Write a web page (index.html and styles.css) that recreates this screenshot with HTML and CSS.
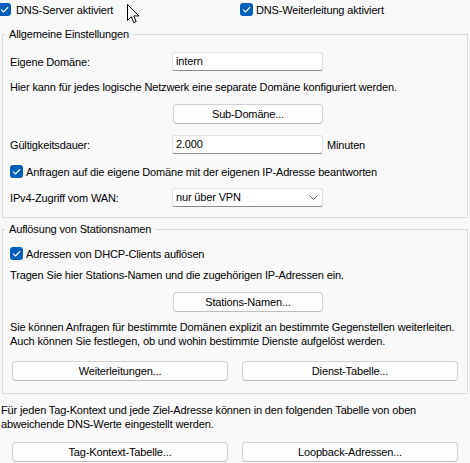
FILE: index.html
```html
<!DOCTYPE html>
<html lang="de">
<head>
<meta charset="utf-8">
<title>DNS</title>
<link rel="stylesheet" href="styles.css">
</head>
<body>
<div class="top">
  <label class="check first"><span class="cb"><svg viewBox="0 0 13 13" width="13" height="13"><path d="M3.3 6.8 L5.5 9 L9.8 4.5" fill="none" stroke="#fff" stroke-width="1.1" stroke-linecap="round" stroke-linejoin="round"/></svg></span>DNS-Server aktiviert</label>
  <label class="check"><span class="cb"><svg viewBox="0 0 13 13" width="13" height="13"><path d="M3.3 6.8 L5.5 9 L9.8 4.5" fill="none" stroke="#fff" stroke-width="1.1" stroke-linecap="round" stroke-linejoin="round"/></svg></span>DNS-Weiterleitung aktiviert</label>
</div>

<fieldset class="group g1">
  <legend>Allgemeine Einstellungen</legend>
  <div class="form-row r-domain">
    <span class="lbl">Eigene Domäne:</span>
    <div class="field">intern</div>
  </div>
  <p class="txt r-hint">Hier kann für jedes logische Netzwerk eine separate Domäne konfiguriert werden.</p>
  <div class="form-row r-sub">
    <span class="lbl"></span>
    <div class="btn narrow">Sub-Domäne...</div>
  </div>
  <div class="form-row r-valid">
    <span class="lbl">Gültigkeitsdauer:</span>
    <div class="field">2.000</div>
    <span class="unit">Minuten</span>
  </div>
  <label class="check inner r-answer"><span class="cb"><svg viewBox="0 0 13 13" width="13" height="13"><path d="M3.3 6.8 L5.5 9 L9.8 4.5" fill="none" stroke="#fff" stroke-width="1.1" stroke-linecap="round" stroke-linejoin="round"/></svg></span>Anfragen auf die eigene Domäne mit der eigenen IP-Adresse beantworten</label>
  <div class="form-row r-wan">
    <span class="lbl">IPv4-Zugriff vom WAN:</span>
    <div class="field select">nur über VPN<svg class="chev" viewBox="0 0 9 5" width="9" height="5"><path d="M0.5 0.5 L4.5 4.5 L8.5 0.5" fill="none" stroke="#5f5f5f" stroke-width="1"/></svg></div>
  </div>
</fieldset>

<fieldset class="group g2">
  <legend>Auflösung von Stationsnamen</legend>
  <label class="check inner r-dhcp"><span class="cb"><svg viewBox="0 0 13 13" width="13" height="13"><path d="M3.3 6.8 L5.5 9 L9.8 4.5" fill="none" stroke="#fff" stroke-width="1.1" stroke-linecap="round" stroke-linejoin="round"/></svg></span>Adressen von DHCP-Clients auflösen</label>
  <p class="txt r-trag">Tragen Sie hier Stations-Namen und die zugehörigen IP-Adressen ein.</p>
  <div class="form-row r-stat">
    <span class="lbl"></span>
    <div class="btn narrow">Stations-Namen...</div>
  </div>
  <p class="txt r-sie">Sie können Anfragen für bestimmte Domänen explizit an bestimmte Gegenstellen weiterleiten.<br>Auch können Sie festlegen, ob und wohin bestimmte Dienste aufgelöst werden.</p>
  <div class="btn-pair r-fwd">
    <div class="btn">Weiterleitungen...</div>
    <div class="btn">Dienst-Tabelle...</div>
  </div>
</fieldset>

<p class="txt bottom-text">Für jeden Tag-Kontext und jede Ziel-Adresse können in den folgenden Tabelle von oben<br>abweichende DNS-Werte eingestellt werden.</p>
<div class="btn-pair bottom-btns">
  <div class="btn">Tag-Kontext-Tabelle...</div>
  <div class="btn">Loopback-Adressen...</div>
</div>

<svg class="cursor" viewBox="0 0 13 20" width="13" height="20"><path d="M0.5 0.5 L0.5 16.5 L4.3 12.8 L6.8 18.6 L9.2 17.6 L6.8 11.9 L11.9 11.9 Z" fill="#fff" stroke="#000" stroke-width="1" stroke-linejoin="round"/></svg>
</body>
</html>
```

FILE: styles.css
```css
* { box-sizing: border-box; }

html, body {
  margin: 0;
  padding: 0;
}

body {
  width: 470px;
  height: 463px;
  overflow: hidden;
  position: relative;
  background: #f9f9f9;
  color: #000;
  font-family: "Liberation Sans", Arial, sans-serif;
  font-size: 11px;
  line-height: 14px;
  letter-spacing: -0.15px;
}

p { margin: 0; }

.txt { white-space: nowrap; }

.top {
  display: grid;
  grid-template-columns: 240px 1fr;
  height: 19px;
  align-items: center;
}

.check {
  display: flex;
  align-items: center;
  height: 13px;
  white-space: nowrap;
}

.check.first { margin-left: -2px; }
.check.first .cb { margin-right: 5px; }

.cb {
  width: 13px;
  height: 13px;
  flex: none;
  border-radius: 3px;
  background: #005fb8;
  margin-right: 3px;
  display: block;
}

.cb svg { display: block; }

.group {
  margin: 8px 2px 0 2px;
  padding: 0 0 0 7px;
  border: 1px solid #dcdcdc;
  min-width: 0;
}

.group legend {
  margin-left: -5px;
  padding: 0 4px 0 4px;
  line-height: 14px;
  height: 14px;
}

.g1 { padding-bottom: 10px; }
.g2 { margin-top: 4px; padding-bottom: 12px; }

.form-row {
  display: grid;
  grid-template-columns: 162px 151px auto;
  align-items: center;
}

.field {
  height: 19px;
  background: #fff;
  border: 1px solid #e3e3e3;
  border-bottom-color: #8a8a8a;
  border-radius: 3px;
  padding: 0 3px;
  line-height: 17px;
  position: relative;
}

.field.select { display: flex; align-items: center; justify-content: space-between; padding-right: 4px; }
.chev { display: block; }

.unit { padding-left: 4px; }

.btn {
  height: 20px;
  background: #fdfdfd;
  border: 1px solid #d3d3d3;
  border-bottom-color: #bdbdbd;
  border-radius: 4px;
  text-align: center;
  line-height: 18px;
}

.btn.narrow { width: 150px; margin-left: 1px; }

.btn-pair {
  display: grid;
  grid-template-columns: 216px 216px;
  column-gap: 14px;
}

.r-domain { margin-top: 11px; }
.r-hint { margin-top: 9px; }
.r-sub { margin-top: 10px; }
.r-valid { margin-top: 11px; }
.r-answer { margin-top: 11px; }
.r-wan { margin-top: 10px; }

.r-dhcp { margin-top: 11px; }
.r-trag { margin-top: 8px; }
.r-stat { margin-top: 10px; }
.r-sie { margin-top: 8px; }
.r-fwd { margin-top: 13px; margin-left: 2px; }

.bottom-text { margin-top: 9px; padding-left: 1px; }
.bottom-btns { margin-top: 11px; margin-left: 12px; }

.cursor {
  position: absolute;
  left: 127px;
  top: 4px;
}
```
